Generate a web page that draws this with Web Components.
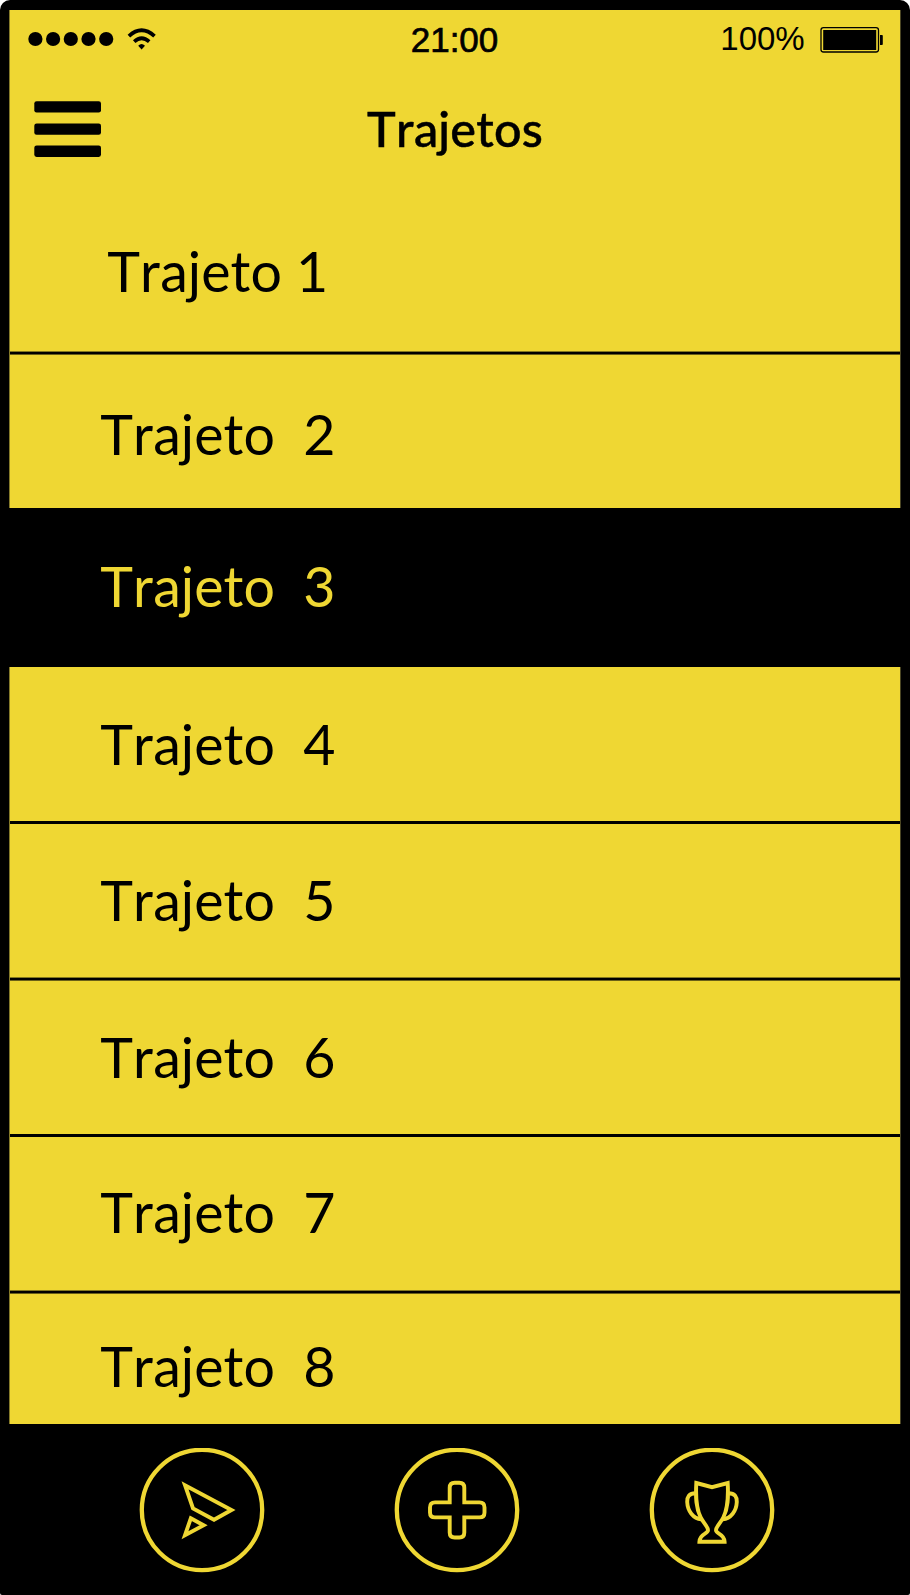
<!DOCTYPE html>
<html lang="pt">
<head>
<meta charset="utf-8">
<title>Trajetos</title>
<style>
html,body{margin:0;background:#fff}
</style>
</head>
<body>
<phone-screen>
  <status-bar slot="top" time="21:00" battery="100%"></status-bar>
  <nav-header slot="top">Trajetos</nav-header>
  <route-row style="--h:152px;--base:88px;--x:97.3px" n="1" line="soft" first>Trajeto</route-row>
  <route-row style="--h:153px;--base:99px" n="2">Trajeto</route-row>
  <route-row style="--h:159px;--base:98px" n="3" active>Trajeto</route-row>
  <route-row style="--h:157px;--base:97px" n="4" line>Trajeto</route-row>
  <route-row style="--h:157px;--base:96px" n="5" line="soft">Trajeto</route-row>
  <route-row style="--h:156px;--base:96px" n="6" line>Trajeto</route-row>
  <route-row style="--h:157px;--base:95px" n="7" line="soft">Trajeto</route-row>
  <route-row style="--h:130px;--base:92px" n="8">Trajeto</route-row>
  <tab-bar slot="bottom">
    <tab-button icon="send"></tab-button>
    <tab-button icon="plus"></tab-button>
    <tab-button icon="cup"></tab-button>
  </tab-bar>
</phone-screen>
<script>
const define = (name, html, setup) => customElements.define(name, class extends HTMLElement {
  connectedCallback() {
    if (this.shadowRoot) return;
    this.attachShadow({mode: "open"}).innerHTML = html;
    if (setup) setup(this, this.shadowRoot);
  }
});

define("phone-screen", `<style>
:host{display:flex;flex-direction:column;box-sizing:border-box;width:910px;height:1595px;
  padding:10px 9px 0;background:#000;border-radius:10px 10px 2px 2px;overflow:hidden;color:#000;
  font-family:Lato,"Liberation Sans",sans-serif;font-kerning:none}
main,header{background:#efd733}
header{border-left:1px solid #857a2a;border-right:1px solid #4a4523}
</style><header><slot name="top"></slot></header><main><slot></slot></main><slot name="bottom"></slot>`);

define("status-bar", `<style>
:host{display:grid;grid-template-columns:1fr auto 1fr;height:60px;align-items:start;
  font:35px/40px "Liberation Sans",Arial,sans-serif}
svg{display:block}
.l{padding:18px 0 0 18.3px}
.t{padding:10px 1px 0 0;-webkit-text-stroke:.7px #000}
.r{display:flex;justify-content:flex-end;padding:9px 17.3px 0 0;gap:15px}
.r span{font-size:33px}
.r svg{margin-top:7px}
</style>
<div class="l"><svg width="130" height="24" viewBox="28 28 130 24">
<g><circle cx="35.4" cy="39" r="7.1"/><circle cx="53.1" cy="39" r="7.1"/><circle cx="70.8" cy="39" r="7.1"/><circle cx="88.5" cy="39" r="7.1"/><circle cx="106.2" cy="39" r="7.1"/></g>
<g fill="none" stroke="#000"><path d="M128.9 36.1Q141.5 24.6 154.5 36.1" stroke-width="3.8"/><path d="M134.2 41.6Q141.6 35 149.2 41.6" stroke-width="3.7"/></g>
<path d="M138.2 45.8Q141.5 42.4 145 45.8L141.6 49.6Z"/></svg></div>
<div class="t"></div>
<div class="r"><span></span><svg width="63" height="27" viewBox="820 26 63 27">
<rect x="821" y="27.6" width="57.5" height="24.4" rx="2.5" fill="none" stroke="#000" stroke-width="1.3"/>
<rect x="823.2" y="30" width="53" height="20"/><path d="M880 35h2q.8 0 .8 1v8q0 1-.8 1h-2z"/></svg></div>`,
(el, r) => { r.querySelector(".t").textContent = el.getAttribute("time"); r.querySelector("span").textContent = el.getAttribute("battery"); });

define("nav-header", `<style>
:host{display:grid;grid-template-columns:1fr auto 1fr;height:133px;font-size:48.5px;line-height:60px;font-weight:500}
svg{display:block;margin:31px 0 0 24.3px}
.t{padding-top:28px;letter-spacing:.2px;-webkit-text-stroke:.5px #000}
</style><svg width="68" height="57" viewBox="34 101 68 57"><rect x="34.3" y="101.2" width="66.7" height="11.4" rx="2.3"/><rect x="34.3" y="123.4" width="66.7" height="11.4" rx="2.3"/><rect x="34.3" y="145.5" width="66.7" height="11.4" rx="2.3"/></svg><div class="t"><slot></slot></div>`);

define("route-row", `<style>
:host{display:flex;box-sizing:border-box;height:var(--h);padding-left:var(--x,90.3px);
 padding-top:calc(var(--base) - 52px);font-size:55.5px;line-height:64px;white-space:pre;
 border:solid;border-width:0 1px;border-color:#000 #4a4523 #000 #857a2a}
:host([line]){background:linear-gradient(#000,#000) left bottom/100% 3px no-repeat}
:host([line=soft]){background:linear-gradient(#857a1e 1px,#000 1px 3px,#6a6018 3px) left bottom/100% 4px no-repeat}
:host([active]){background:#000;color:#efd733;border-color:#000}
</style><slot></slot><span></span>`,
(el, r) => r.querySelector("span").textContent = (el.hasAttribute("first") ? " " : "  ") + el.getAttribute("n"));

define("tab-bar", `<style>:host{display:flex;justify-content:center;gap:129px;padding:24px 0 0 3.6px}</style><slot></slot>`);

const icons = {
  send: `<path d="M46 37.2 54 60.5 75 71.8 92.5 62Z"/><path d="M51.8 70.3 64.6 77.3 46 87.2Z"/>`,
  plus: `<path d="M55.7 54.4V39.7q0-5 5-5h4.6q5 0 5 5V54.4H85.5q5 0 5 5v5q0 5-5 5H70.3V84.5q0 5-5 5h-4.6q-5 0-5-5V69.4H41q-5 0-5-5v-5q0-5 5-5Z"/>`,
  cup: `<path d="M47.3 35 63 39.2 78.7 35C79.5 50 79 60 74.3 69.5C71.5 75 67 78.5 67 82.3C67 86 75.3 85.5 75.6 93.7H50.4C50.7 85.5 59 86 59 82.3C59 78.5 54.5 75 51.7 69.5C47 60 46.5 50 47.3 35Z"/><path d="M46.5 45.3C40 45.3 38 49 38.2 54C38.6 63 44 70.5 52.5 71.3M79.5 45.3C86 45.3 88 49 87.8 54C87.4 63 82 70.5 73.5 71.3"/>`
};
define("tab-button", `<style>:host{display:block;width:126px;height:126px}svg{display:block}</style>
<svg width="126" height="126" viewBox="0 0 126 126" fill="none" stroke="#efd733"><circle cx="63" cy="62" r="60.2" stroke-width="4.3"/><g stroke-width="3.9"></g></svg>`,
(el, r) => r.querySelector("g").innerHTML = icons[el.getAttribute("icon")]);
</script>
</body>
</html>
